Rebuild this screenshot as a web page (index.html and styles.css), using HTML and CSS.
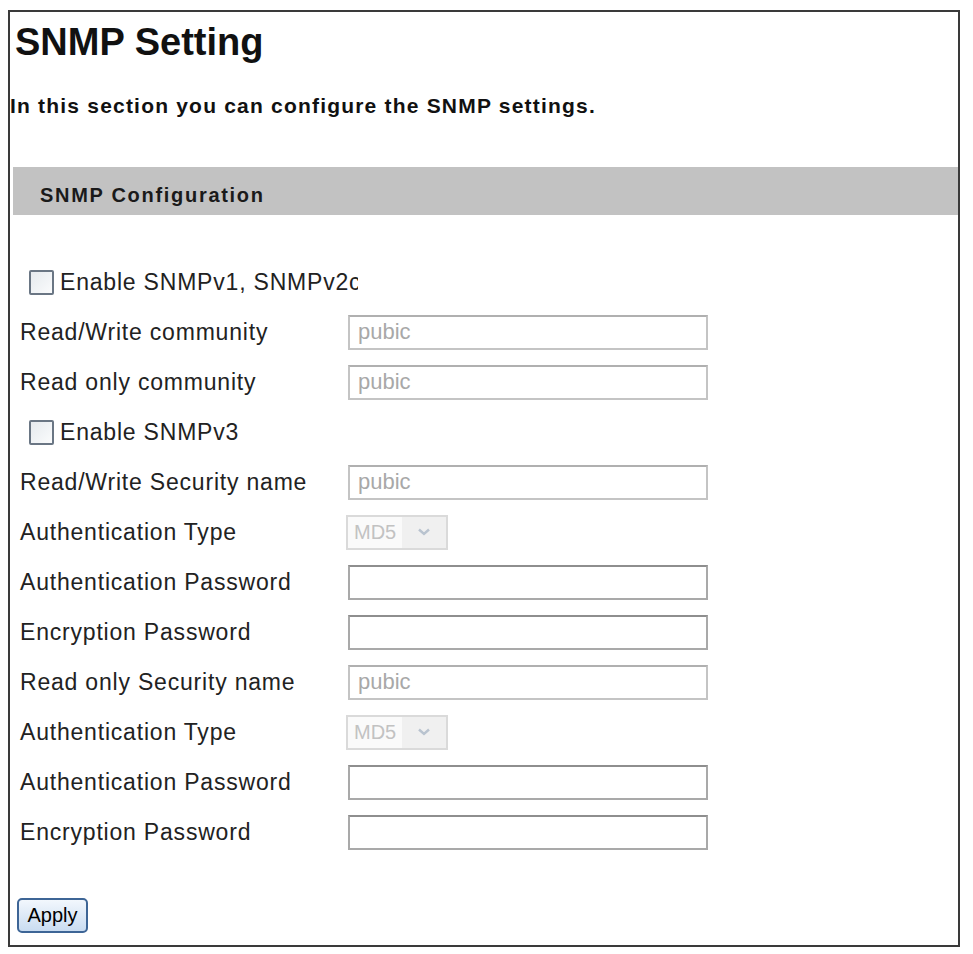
FILE: index.html
```html
<!DOCTYPE html>
<html>

<head>
  <meta charset="UTF-8">
  <title>SNMP Setting</title>
  <link rel="stylesheet" href="styles.css">
</head>

<body>
  <div class="frame">
    <h1>SNMP Setting</h1>
    <p class="intro">In this section you can configure the SNMP settings.</p>

    <div class="section-bar">SNMP Configuration</div>

    <form class="snmp-form" onsubmit="return false;">
      <!-- SNMP v1 / v2c -->
      <div class="row check-row">
        <input type="checkbox" id="v1">
        <label for="v1" class="check-label">Enable SNMPv1, SNMPv2c</label>
      </div>
      <div class="row">
        <label class="field-label">Read/Write community</label>
        <input type="text" class="text-field" value="pubic" disabled>
      </div>
      <div class="row">
        <label class="field-label">Read only community</label>
        <input type="text" class="text-field" value="pubic" disabled>
      </div>

      <!-- SNMP v3 -->
      <div class="row check-row">
        <input type="checkbox" id="v3">
        <label for="v3" class="check-label">Enable SNMPv3</label>
      </div>
      <div class="row">
        <label class="field-label">Read/Write Security name</label>
        <input type="text" class="text-field" value="pubic" disabled>
      </div>
      <div class="row">
        <label class="field-label">Authentication Type</label>
        <div class="select-box">
          <select disabled>
            <option>MD5</option>
          </select>
          <span class="select-arrow">
            <svg width="14" height="8" viewBox="0 0 14 8"><path d="M2 1.5 L7 6 L12 1.5" fill="none" stroke="#b9c3cf" stroke-width="2.4"/></svg>
          </span>
        </div>
      </div>
      <div class="row">
        <label class="field-label">Authentication Password</label>
        <input type="password" class="text-field">
      </div>
      <div class="row">
        <label class="field-label">Encryption Password</label>
        <input type="password" class="text-field">
      </div>
      <div class="row">
        <label class="field-label">Read only Security name</label>
        <input type="text" class="text-field" value="pubic" disabled>
      </div>
      <div class="row">
        <label class="field-label">Authentication Type</label>
        <div class="select-box">
          <select disabled>
            <option>MD5</option>
          </select>
          <span class="select-arrow">
            <svg width="14" height="8" viewBox="0 0 14 8"><path d="M2 1.5 L7 6 L12 1.5" fill="none" stroke="#b9c3cf" stroke-width="2.4"/></svg>
          </span>
        </div>
      </div>
      <div class="row">
        <label class="field-label">Authentication Password</label>
        <input type="password" class="text-field">
      </div>
      <div class="row">
        <label class="field-label">Encryption Password</label>
        <input type="password" class="text-field">
      </div>

      <button type="submit" class="apply-button">Apply</button>
    </form>
  </div>
</body>

</html>
```

FILE: styles.css
```css
body {
  margin: 0;
  font-family: "Liberation Sans", Arial, sans-serif;
  background-color: #fff;
  color: #222;
}

.frame {
  width: 948px;
  margin: 10px 0 0 8px;
  padding-bottom: 12px;
  border: 2px solid #3a3a3a;
}

h1 {
  margin: 9px 0 0 5px;
  font-size: 38px;
  line-height: 42px;
  color: #111;
}

.intro {
  margin: 31px 0 0 0;
  font-size: 21px;
  font-weight: bold;
  line-height: 24px;
  letter-spacing: 1.2px;
  color: #111;
}

.section-bar {
  margin: 49px 0 0 3px;
  height: 40px;
  padding: 8px 0 0 27px;
  background-color: #c2c2c2;
  font-size: 20px;
  font-weight: bold;
  line-height: 40px;
  letter-spacing: 1.7px;
  color: #1a1a1a;
}

.snmp-form {
  margin-top: 42px;
  padding-left: 10px;
}

.row {
  display: flex;
  align-items: center;
  height: 50px;
  font-size: 23px;
  letter-spacing: 0.8px;
}

.field-label {
  width: 328px;
  white-space: nowrap;
}

/* Checkbox rows */
.check-row input {
  appearance: none;
  -webkit-appearance: none;
  width: 25px;
  height: 25px;
  margin: 0 6px 0 9px;
  border: 2px solid #6a7684;
  border-radius: 2px;
  background: linear-gradient(135deg, #e6eaee, #fafbfc);
  box-sizing: border-box;
}

.check-label {
  max-width: 298px;
  overflow: hidden;
  white-space: nowrap;
}

.text-field {
  width: 360px;
  height: 35px;
  box-sizing: border-box;
  padding: 0 0 0 8px;
  border: 2px solid #a9a9a9;
  border-top-color: #8e8e8e;
  background-color: #fff;
  font-family: "Liberation Sans", Arial, sans-serif;
  font-size: 22px;
  color: #a8a8a8;
}

.text-field:disabled {
  background-color: #fff;
  color: #a8a8a8;
  border-color: #c4c4c4;
  border-top-color: #b0b0b0;
}

/* Disabled drop-down */
.select-box {
  display: flex;
  width: 102px;
  height: 35px;
  box-sizing: border-box;
  margin-left: -2px;
  border: 2px solid #dadada;
  background-color: #fafafa;
}

.select-box select {
  appearance: none;
  -webkit-appearance: none;
  width: 54px;
  border: none;
  padding: 0 0 0 6px;
  background: transparent;
  font-family: "Liberation Sans", Arial, sans-serif;
  font-size: 20px;
  color: #ababab;
}

.select-arrow {
  flex: 1;
  display: flex;
  align-items: center;
  justify-content: center;
  background-color: #f0f0f0;
}

.apply-button {
  margin: 41px 0 0 -3px;
  width: 71px;
  height: 35px;
  padding: 0;
  border: 2px solid #3d6596;
  border-radius: 5px;
  background: linear-gradient(#f2f7fd, #c9dcf1);
  font-family: "Liberation Sans", Arial, sans-serif;
  font-size: 20px;
  color: #000;
  cursor: pointer;
}
```
